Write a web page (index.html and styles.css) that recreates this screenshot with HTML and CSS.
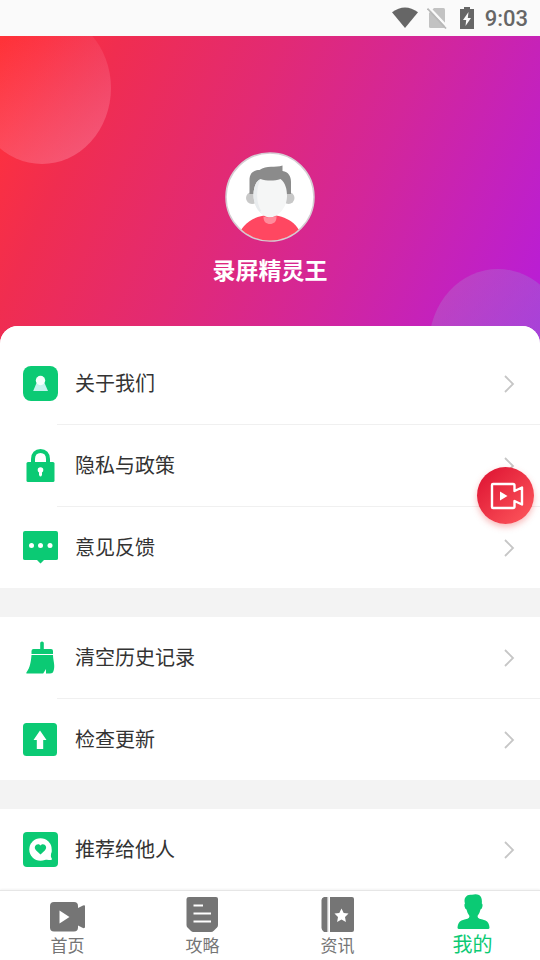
FILE: index.html
```html
<!DOCTYPE html>
<html lang="zh-CN">
<head>
<meta charset="utf-8">
<meta name="viewport" content="width=device-width, initial-scale=1">
<title>我的</title>
<link rel="stylesheet" href="styles.css">
</head>
<body>
<div class="status">
  <svg width="26" height="22" viewBox="0 0 26 22" aria-hidden="true"><path fill="#666" d="M0 5.200Q13-4.200 26 5.200L13 21z"/></svg>
  <svg width="20" height="22" viewBox="0 0 20 22" aria-hidden="true"><path fill="#c2c2c2" d="M7 1h9.500q1.500 0 1.500 1.500v17q0 1.500-1.500 1.500h-13Q2 21 2 19.500V6z"/><path stroke="#fafafa" stroke-width="2.500" d="M2 .5l18 19"/><path stroke="#b8b8b8" stroke-width="1.700" d="M.5 1.500l18.500 20"/></svg>
  <svg width="14" height="22" viewBox="0 0 14 22" aria-hidden="true"><path fill="#666" d="M4 0h6v2h4v20H0V2h4z"/><path fill="#fafafa" d="M8.500 5L3 13h3.200L5.500 19 11 11H7.800z"/></svg>
  <span class="clock">9:03</span>
</div>
<header class="hero">
  <svg class="avatar" viewBox="0 0 90 90" role="img" aria-label="头像">
    <defs><clipPath id="face"><circle cx="45" cy="45" r="43.500"/></clipPath></defs>
    <circle cx="45" cy="45" r="44" fill="#fff" stroke="#d5cdd3" stroke-width="1.500"/>
    <g clip-path="url(#face)">
      <circle cx="27" cy="46" r="6" fill="#c8c8c8"/><circle cx="63.500" cy="46" r="6" fill="#c8c8c8"/>
      <path fill="#8b8b8b" d="M24.500 41V28c0-7 4-10 10-10 7-5 16-2 23-4.500v5.500c6 1 8.500 5 8.500 11v12H24.500z"/>
      <path fill="#f5f6f6" d="M28.500 43c0-9 3-14 7-16 6 2 14 2 20 0 5 4 6.500 10 6.500 17 0 11-8 21-17 21S28.500 54 28.500 43z"/>
      <path fill="#e9ecee" d="M28.500 43c0-9 3-14 7-16-5 11-5 27 4 36-7-3-11-11-11-20z"/>
      <path fill="#ff4761" d="M13 90c0-17 16-27 32-27s32 10 32 27z"/>
      <path fill="#f5f6f6" d="M35 59h20c-2 4-6 6.500-10 6.500S37 63 35 59z"/>
      <path fill="#ff8c9b" d="M38.500 64.500q6.500 2 13-.5v1c0 5-3 7-6.500 7s-6.500-2-6.500-7z"/>
    </g>
  </svg>
  <h1 class="name">录屏精灵王</h1>
</header>
<main class="menu">
  <section class="group group-first">
    <a class="row" href="#about">
      <svg class="icon" viewBox="0 0 35 35" aria-hidden="true"><rect width="35" height="35" rx="8" fill="#0bca74"/><path fill="#c5f3ee" d="M13.500 17h8l3.500 8H10.200z"/><circle cx="17.500" cy="14.500" r="4.700" fill="#f4fffc"/></svg>
      <span class="label">关于我们</span>
      <svg class="chevron" viewBox="0 0 11 18" aria-hidden="true"><path d="M1 1l8 8-8 8"/></svg>
    </a>
    <a class="row" href="#privacy">
      <svg class="icon" viewBox="0 0 35 35" aria-hidden="true"><path fill="none" stroke="#0bca74" stroke-width="4" d="M10 15v-4c0-5 3-8 7.500-8s7.500 3 7.500 8v4"/><rect x="3.500" y="14" width="28" height="20" rx="1.500" fill="#0bca74"/><circle cx="17.500" cy="22" r="2.800" fill="#fff"/><path fill="#fff" d="M16 23h3v4q-1.500 3-3 0z"/></svg>
      <span class="label">隐私与政策</span>
      <svg class="chevron" viewBox="0 0 11 18" aria-hidden="true"><path d="M1 1l8 8-8 8"/></svg>
    </a>
    <a class="row" href="#feedback">
      <svg class="icon" viewBox="0 0 35 35" aria-hidden="true"><path fill="#0bca74" d="M2 1h31q2 0 2 2v25.500q0 1.500-2 1.500H21l-3.500 3.500L14 30H2q-2 0-2-1.500V3q0-2 2-2z"/><g fill="#fff"><circle cx="8.500" cy="15.500" r="2.500"/><circle cx="17.500" cy="15.500" r="2.500"/><circle cx="27" cy="15.500" r="2.500"/></g></svg>
      <span class="label">意见反馈</span>
      <svg class="chevron" viewBox="0 0 11 18" aria-hidden="true"><path d="M1 1l8 8-8 8"/></svg>
    </a>
  </section>
  <section class="group">
    <a class="row" href="#clear">
      <svg class="icon" viewBox="0 0 35 35" aria-hidden="true"><path fill="#0bca74" d="M17.200 3q0-1.500 1.800-1.500T20.800 3v6H28q2 0 2 2v3H8.500v-3q0-2 2-2h6.700zM8.500 15H30c0 5 2.500 11 .5 16-.7 1.800-1.500 2.500-3.500 2.500h-4v-4.500l-2.800 4.500H4.500q-2 0-.8-1.500C7 28 8 21 8.500 15z"/></svg>
      <span class="label">清空历史记录</span>
      <svg class="chevron" viewBox="0 0 11 18" aria-hidden="true"><path d="M1 1l8 8-8 8"/></svg>
    </a>
    <a class="row" href="#update">
      <svg class="icon" viewBox="0 0 35 35" aria-hidden="true"><rect y="1" width="34" height="33" rx="3.500" fill="#0bca74"/><path fill="#fff" d="M17 8.500l6.500 9.500H20.200v9h-6.400v-9h-3.300z"/></svg>
      <span class="label">检查更新</span>
      <svg class="chevron" viewBox="0 0 11 18" aria-hidden="true"><path d="M1 1l8 8-8 8"/></svg>
    </a>
  </section>
  <section class="group">
    <a class="row" href="#share">
      <svg class="icon" viewBox="0 0 35 35" aria-hidden="true"><rect width="35" height="35" rx="4" fill="#0bca74"/><circle cx="17.500" cy="17.500" r="11.200" fill="#fff"/><path fill="#fff" d="M28.500 18c0 4-1.500 6 .3 8.500q.5 1.500-1 1.500c-3 0-5-.3-7-1z"/><path fill="#0bca74" d="M17.500 22.500l-4.300-4c-4-4.500 1.800-8.500 4.300-5 2.500-3.500 8.300.5 4.300 5z"/></svg>
      <span class="label">推荐给他人</span>
      <svg class="chevron" viewBox="0 0 11 18" aria-hidden="true"><path d="M1 1l8 8-8 8"/></svg>
    </a>
  </section>
</main>
<button class="record" type="button" aria-label="录屏">
  <svg width="34" height="28" viewBox="0 0 34 28" aria-hidden="true"><path fill="none" stroke="#fff" stroke-width="2.400" stroke-linejoin="round" d="M3 2h20q1.500 0 1.500 1.500V9l7.500-3.500v17L24.500 19v5.500q0 1.500-1.500 1.500H3q-1 0-1-1V3q0-1 1-1z"/><path fill="#fff" d="M10 9.500l7.500 4.500-7.500 4.500z"/></svg>
</button>
<nav class="tabs">
  <a class="tab" href="#home">
    <svg class="tab-icon" viewBox="0 0 35 35" aria-hidden="true"><path fill="#757575" d="M4 5h20q4 0 4 4v2l5-2.500q2-.5 2 .5v21q0 1.500-2 1L28 28.500v2q0 4-4 4H4q-4 0-4-4V9q0-4 4-4z"/><path fill="#fff" d="M9.500 13.500v13l10-6.500z"/></svg>
    <span>首页</span>
  </a>
  <a class="tab" href="#guide">
    <svg class="tab-icon" viewBox="0 0 35 35" aria-hidden="true"><path fill="#757575" d="M4 0h27q2 0 2 2v26q0 1.500-1 2.500l-3 3q-1.500 1.500-3 1.500H8.500q-1.500 0-3-1.500l-3-3q-1-1-1-2.500V2q0-2 2.500-2z"/><path stroke="#fff" stroke-width="2.200" d="M8.500 8.500H18M8.500 16.500H26M8.500 24.500H26"/></svg>
    <span>攻略</span>
  </a>
  <a class="tab" href="#news">
    <svg class="tab-icon" viewBox="0 0 35 35" aria-hidden="true"><path fill="#757575" d="M4 0h3.500v35H4q-2.500-2-2.500-4V3Q1.500 1 4 0zM10 0h22q2 0 2 2v31q0 2-2 2H10z"/><path fill="#c4c4c4" d="M7.500 0h.8v35h-.8z"/><path fill="#fff" d="M21.500 11.500l2.200 4.500 4.800.6-3.500 3.400.9 5-4.400-2.400-4.400 2.400.9-5-3.500-3.400 4.800-.6z"/></svg>
    <span>资讯</span>
  </a>
  <a class="tab tab-active" href="#mine" aria-current="page">
    <svg class="tab-icon" viewBox="0 0 35 35" aria-hidden="true"><path fill="#0bca74" d="M10 4Q12 0 17 .8 21-.5 24 1q3.500 2 2.800 8.500 1.200.5.500 3.500-.5 2-1.800 2.500Q24.500 20 22.500 22q0 2 2 2.800 3 .6 6 1.700 3.500 1.500 4 7 0 1.500-1.500 1.500H4q-1.500 0-1.500-1.500.5-5.500 4-7 3-1.100 6-1.700 2-.8 2-2.800-2-2-3-6.500Q10.200 15 9.700 13q-.7-3 .3-3.500Q9 6.500 10 4z"/></svg>
    <span>我的</span>
  </a>
</nav>
</body>
</html>
```
FILE: styles.css
```css
* { box-sizing: border-box; }

body {
  margin: 0;
  min-height: 100vh;
  display: flex;
  flex-direction: column;
  background: #fff;
  color: #333;
  font-family: Roboto, "Noto Sans CJK SC", sans-serif;
}

svg { display: block; flex: none; }
a { color: inherit; text-decoration: none; }

.status {
  display: flex;
  align-items: center;
  justify-content: flex-end;
  gap: 11px;
  height: 36px;
  padding: 0 12px 0 0;
  background: #fafafa;
}
.status svg:nth-child(2) { margin-right: 2px; }
.status svg:first-child { margin-right: -2px; }
.clock {
  color: #666;
  font-size: 22px;
  font-weight: 500;
  line-height: 36px;
  padding-top: 2px;
}

.hero {
  position: relative;
  overflow: hidden;
  display: flex;
  flex-direction: column;
  align-items: center;
  gap: 12px;
  padding: 116px 0 56px;
  background: linear-gradient(114deg, #ff3338 0%, #fc3040 7%, #f02d50 18%, #e22a74 42%, #d3269a 64%, #c622b8 80%, #b81dd8 98%, #b41ddb 100%);
}
.hero::before,
.hero::after {
  content: "";
  position: absolute;
  width: 138px;
  height: 152px;
  border-radius: 50%;
}
.hero::before {
  left: -27px;
  top: -24px;
  background: linear-gradient(150deg, rgba(255, 70, 60, 0) 20%, rgba(255, 150, 170, .45) 100%);
}
.hero::after {
  right: -27px;
  bottom: -75px;
  background: linear-gradient(135deg, rgba(190, 120, 200, .35), rgba(130, 110, 220, .5));
}
.avatar { width: 90px; height: 90px; }
.name {
  margin: 0;
  color: #fff;
  font-size: 23px;
  font-weight: 700;
  line-height: 36px;
}

.menu {
  position: relative;
  flex: 1;
  margin-top: -20px;
  display: flex;
  flex-direction: column;
  gap: 29px;
  border-radius: 18px 18px 0 0;
  background: #f3f3f3;
}
.group { background: #fff; }
.group-first {
  padding-top: 17px;
  border-radius: 18px 18px 0 0;
}
.row {
  display: flex;
  align-items: center;
  height: 81px;
  padding: 0 25px 0 23px;
}
.row + .row {
  height: 82px;
  border-top: 1px solid;
  border-image: linear-gradient(to right, transparent 58px, #f0f0f0 58px) 1;
}
.icon { width: 35px; height: 35px; }
.label {
  flex: 1;
  padding-left: 17px;
  font-size: 20px;
  line-height: 30px;
}
.chevron {
  width: 11px;
  height: 18px;
  fill: none;
  stroke: #c6c6c6;
  stroke-width: 1.8;
}

.record {
  position: fixed;
  right: 6px;
  bottom: 436px;
  display: grid;
  place-items: center;
  width: 57px;
  height: 57px;
  padding: 0 0 0 3px;
  border: 0;
  border-radius: 50%;
  background: linear-gradient(135deg, #dc1030, #ff5a5e);
  box-shadow: 0 3px 6px rgba(235, 60, 60, .35);
}

.tabs {
  position: relative;
  display: grid;
  grid-template-columns: repeat(4, 1fr);
  height: 70px;
  border-top: 1px solid #e6e6e6;
  box-shadow: 0 -1px 2px rgba(0, 0, 0, .05);
  background: #fff;
}
.tab {
  display: flex;
  flex-direction: column;
  align-items: center;
  padding-top: 6px;
  color: #757575;
  font-size: 17px;
  line-height: 28px;
}
.tab-icon { width: 35px; height: 35px; }
.tab-active {
  padding-top: 3px;
  color: #0bca74;
  font-size: 20px;
  line-height: 32px;
}
```
